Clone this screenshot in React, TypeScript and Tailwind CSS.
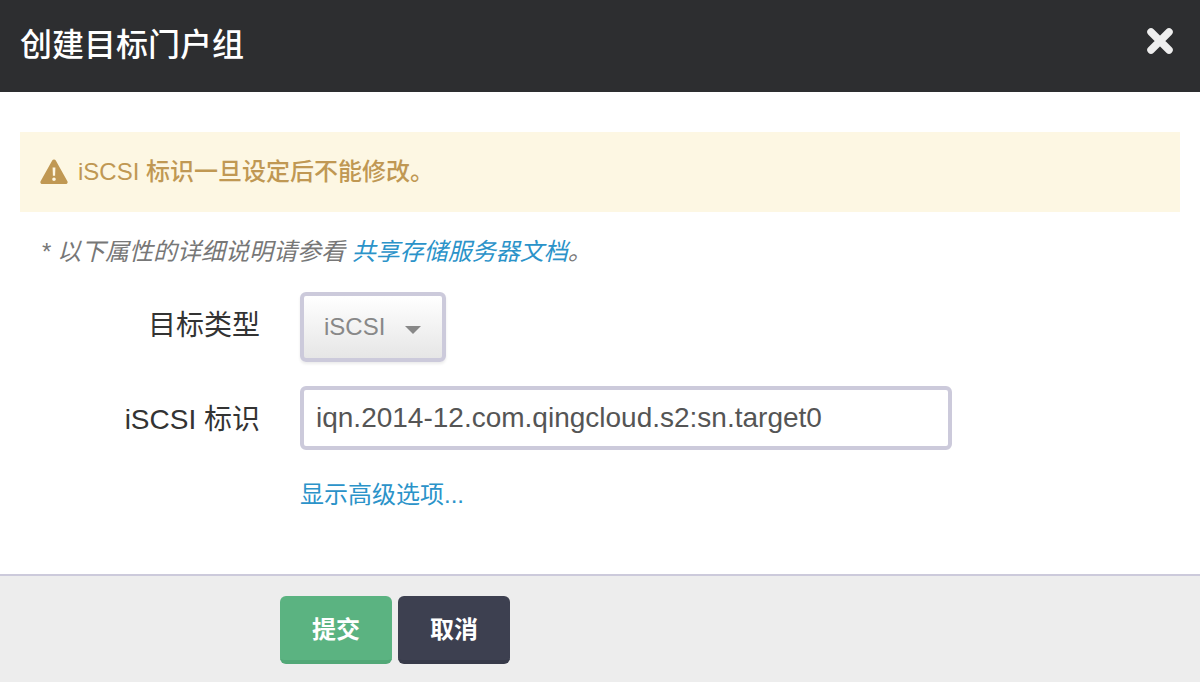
const font = "font-['Liberation_Sans','Noto_Sans_CJK_SC',sans-serif]";

export default function App() {
  return (
    <div className={`flex h-[682px] w-[1200px] flex-col overflow-hidden bg-white ${font}`}>
      <header className="flex h-[92px] shrink-0 items-center justify-between bg-[#2d2e30] pl-5 pr-[26px]">
        <h1 className="mb-0.5 text-[32px] leading-none font-medium text-white">创建目标门户组</h1>
        <svg width="28" height="28" viewBox="0 0 28 28" className="mb-[11px] text-[#eeeeee]">
          <path d="M5 5 L23 23 M23 5 L5 23" stroke="currentColor" strokeWidth="7.5" strokeLinecap="round" />
        </svg>
      </header>

      <main className="flex-1 px-5 pt-10">
        <div className="flex h-20 items-center gap-2.5 bg-[#fdf7e3] pl-5 text-2xl font-medium text-[#c09853]">
          <svg width="28" height="25" viewBox="0 0 28 25" className="mb-0.5">
            <path
              fillRule="evenodd"
              fill="currentColor"
              d="M14 0.5c.8 0 1.400.4 1.800 1.100l11.600 20.600c.7 1.300-.2 2.800-1.700 2.800H2.300C.8 25-.1 23.500.6 22.200L12.200 1.600C12.600.9 13.200.5 14 .5zM12.600 8.500l.3 8.300h2.200l.3-8.300h-2.800zM14 18.500a1.800 1.800 0 1 0 0 3.600a1.800 1.800 0 0 0 0-3.600z"
            />
          </svg>
          <span>iSCSI 标识一旦设定后不能修改。</span>
        </div>

        <p className="mt-6 pl-[21px] text-2xl leading-8 text-[#777777] italic">
          * 以下属性的详细说明请参看 <a className="text-[#2b93c9]">共享存储服务器文档</a>。
        </p>

        <div className="mt-6 flex items-center gap-10">
          <label className="mb-0.5 w-60 text-right text-[28px] text-[#333333]">目标类型</label>
          <div className="flex h-[70px] w-[146px] items-center gap-5 rounded-md border-4 border-[#cccadb] bg-gradient-to-b from-white to-[#e6e6e6] pl-5 text-2xl text-[#888888] shadow-[0_2px_3px_rgba(0,0,0,0.08)]">
            <span>iSCSI</span>
            <svg width="16" height="8" viewBox="0 0 16 8" className="mt-[6px] text-[#888888]">
              <path d="M0 0h16L8 8z" fill="currentColor" />
            </svg>
          </div>
        </div>

        <div className="mt-6 flex items-center gap-10">
          <label className="mt-[3px] w-60 text-right text-[28px] text-[#333333]">iSCSI 标识</label>
          <div className="flex h-16 w-[652px] items-center rounded-md border-4 border-[#cccadb] pl-3 text-[28px] text-[#555555]">
            iqn.2014-12.com.qingcloud.s2:sn.target0
          </div>
        </div>

        <a className="mt-[27px] ml-[280px] block text-2xl leading-9 text-[#2b93c9]">显示高级选项...</a>
      </main>

      <footer className="flex h-[108px] shrink-0 items-start gap-1.5 border-t-2 border-[#cccadb] bg-[#ededed] pt-5 pl-[280px]">
        <button className="h-[68px] w-28 rounded-md border-b-4 border-[#52a877] bg-[#5bb381] pt-1 text-2xl font-bold text-white">
          提交
        </button>
        <button className="h-[68px] w-28 rounded-md border-b-4 border-[#373a49] bg-[#3d4050] pt-1 text-2xl font-bold text-white">
          取消
        </button>
      </footer>
    </div>
  );
}
